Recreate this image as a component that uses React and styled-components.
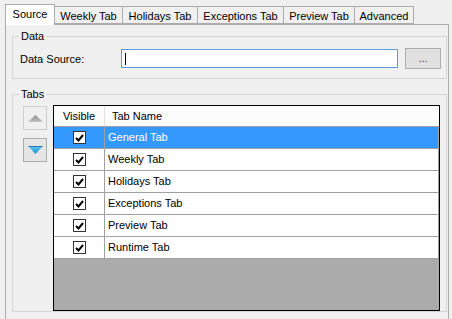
import React from "react";
import styled, { createGlobalStyle } from "styled-components";

const GlobalStyle = createGlobalStyle`
html, body {
    margin: 0;
    padding: 0;
    background: #f0f0f0;
    overflow: hidden;
}
* {
    box-sizing: border-box;
    font-family: "Liberation Sans", Arial, sans-serif;
    font-size: 11px;
    color: #000;
}
`;

const Window = styled.div`
  width: 452px;
  height: 319px;
  padding: 4px 0 0 5px;
  overflow: hidden;
`;

const TabStrip = styled.div`
  display: flex;
  align-items: flex-end;
  height: 20px;
`;

const Tab = styled.div`
  position: relative;
  width: ${({ width }) => width}px;
  height: ${({ active }) => (active ? "21px" : "18px")};
  margin-left: ${({ first }) => (first ? "0" : "-1px")};
  margin-bottom: ${({ active }) => (active ? "-1px" : "0")};
  z-index: ${({ active }) => (active ? 1 : 0)};
  padding-top: 3px;
  border: 1px solid #acacac;
  border-bottom: ${({ active }) => (active ? "none" : "1px solid #acacac")};
  background: ${({ active }) => (active ? "#fff" : "#f0f0f0")};
  line-height: 13px;
  text-align: center;
  white-space: nowrap;
`;

const Panel = styled.div`
  width: 444px;
  border: 1px solid #acacac;
  padding: 5px 1px 20px 6px;
  background: #f0f0f0;
`;

const Group = styled.fieldset`
  margin: ${({ gapTop }) => gapTop}px 0 0 0;
  padding: 0;
  border: 1px solid #d5d5d5;
  min-width: 0;
`;

const Legend = styled.legend`
  margin-left: 6px;
  padding: 0 2px;
  line-height: 13px;
`;

const FieldRow = styled.div`
  display: flex;
  align-items: center;
  padding: 5px 0 9px 7px;
`;

const FieldLabel = styled.span`
  width: 101px;
`;

const TextBox = styled.div`
  width: 277px;
  height: 19px;
  border: 1px solid #5b9ee0;
  background: #fff;
  padding: 3px 0 0 3px;
`;

const Caret = styled.span`
  display: block;
  width: 1px;
  height: 12px;
  background: #000;
`;

const BrowseButton = styled.div`
  width: 36px;
  height: 21px;
  margin-left: 7px;
  border: 1px solid #adadad;
  background: #e1e1e1;
  color: #4b1e6e;
  line-height: 18px;
  text-align: center;
`;

const TabsBody = styled.div`
  display: flex;
  align-items: flex-start;
  padding: 4px 0 0 10px;
`;

const MoveButtons = styled.div`
  display: flex;
  flex-direction: column;
  gap: 8px;
  margin-top: 1px;
`;

const MoveButton = styled.div`
  width: 24px;
  height: 24px;
  display: flex;
  align-items: center;
  justify-content: center;
  border: 1px solid ${({ disabled }) => (disabled ? "#cfcfcf" : "#adadad")};
  background: ${({ disabled }) => (disabled ? "#f0f0f0" : "#e5e5e5")};
`;

const Grid = styled.div`
  width: 387px;
  height: 206px;
  margin-left: 6px;
  border: 1px solid #000;
  display: flex;
  flex-direction: column;
  background: #fff;
`;

const HeaderRow = styled.div`
  display: grid;
  grid-template-columns: 51px 1fr;
  height: 21px;
  background: #fcfcfc;
  border-bottom: 1px solid #a0a0a0;
`;

const HeaderCell = styled.div`
  line-height: 20px;
  padding-left: ${({ center }) => (center ? "0" : "7px")};
  text-align: ${({ center }) => (center ? "center" : "left")};
  border-right: ${({ center }) => (center ? "1px solid #e3e3e3" : "none")};
`;

const Row = styled.div`
  display: grid;
  grid-template-columns: 51px 1fr;
  height: 22px;
  border-bottom: 1px solid #a0a0a0;
  background: ${({ selected }) => (selected ? "#3399ff" : "#fff")};
`;

const CheckCell = styled.div`
  display: flex;
  align-items: center;
  justify-content: center;
  padding-left: 1px;
  border-right: 1px solid #a0a0a0;
`;

const NameCell = styled.div`
  padding-left: 3px;
  line-height: 21px;
  border-right: 1px solid #a0a0a0;
  color: ${({ selected }) => (selected ? "#fff" : "#000")};
`;

const Box = styled.div`
  width: 13px;
  height: 13px;
  border: 1px solid #333;
  background: #fff;
  display: flex;
  align-items: center;
  justify-content: center;
`;

const Filler = styled.div`
  flex: 1;
  background: #ababab;
`;

const tabs = [
  { name: "Source", width: 50 },
  { name: "Weekly Tab", width: 69 },
  { name: "Holidays Tab", width: 76 },
  { name: "Exceptions Tab", width: 87 },
  { name: "Preview Tab", width: 72 },
  { name: "Advanced", width: 60 },
];

const rows = [
  "General Tab",
  "Weekly Tab",
  "Holidays Tab",
  "Exceptions Tab",
  "Preview Tab",
  "Runtime Tab",
];

const Check = () => (
  <svg width="9" height="8" viewBox="0 0 9 8">
    <path d="M1 4 L3.5 6.5 L8 1" fill="none" stroke="#000" strokeWidth="2" />
  </svg>
);

const UpArrow = () => (
  <svg width="15" height="7" viewBox="0 0 15 7">
    <defs>
      <linearGradient id="upg" x1="0" y1="0" x2="0" y2="1">
        <stop offset="0" stopColor="#8a8a8a" />
        <stop offset="1" stopColor="#c4c4c4" />
      </linearGradient>
    </defs>
    <path d="M7.5 0 L15 7 L0 7 Z" fill="url(#upg)" />
  </svg>
);

const DownArrow = () => (
  <svg width="15" height="8" viewBox="0 0 15 8">
    <defs>
      <linearGradient id="dng" x1="0" y1="0" x2="0" y2="1">
        <stop offset="0" stopColor="#5fcdf3" />
        <stop offset="1" stopColor="#1b8fcb" />
      </linearGradient>
    </defs>
    <path d="M0 0 L15 0 L7.5 8 Z" fill="url(#dng)" />
    <path d="M0.5 0.5 L14.5 0.5" stroke="#2c78a8" strokeWidth="1" />
  </svg>
);

export default function App() {
  return (
    <Window>
      <GlobalStyle />
      <TabStrip>
        {tabs.map((t, i) => (
          <Tab key={t.name} width={t.width} first={i === 0} active={i === 0}>
            {t.name}
          </Tab>
        ))}
      </TabStrip>
      <Panel>
        <Group gapTop={0}>
          <Legend>Data</Legend>
          <FieldRow>
            <FieldLabel>Data Source:</FieldLabel>
            <TextBox>
              <Caret />
            </TextBox>
            <BrowseButton>...</BrowseButton>
          </FieldRow>
        </Group>
        <Group gapTop={9}>
          <Legend>Tabs</Legend>
          <TabsBody>
            <MoveButtons>
              <MoveButton disabled>
                <UpArrow />
              </MoveButton>
              <MoveButton>
                <DownArrow />
              </MoveButton>
            </MoveButtons>
            <Grid>
              <HeaderRow>
                <HeaderCell center>Visible</HeaderCell>
                <HeaderCell>Tab Name</HeaderCell>
              </HeaderRow>
              {rows.map((name, i) => (
                <Row key={name} selected={i === 0}>
                  <CheckCell>
                    <Box>
                      <Check />
                    </Box>
                  </CheckCell>
                  <NameCell selected={i === 0}>{name}</NameCell>
                </Row>
              ))}
              <Filler />
            </Grid>
          </TabsBody>
        </Group>
      </Panel>
    </Window>
  );
}
